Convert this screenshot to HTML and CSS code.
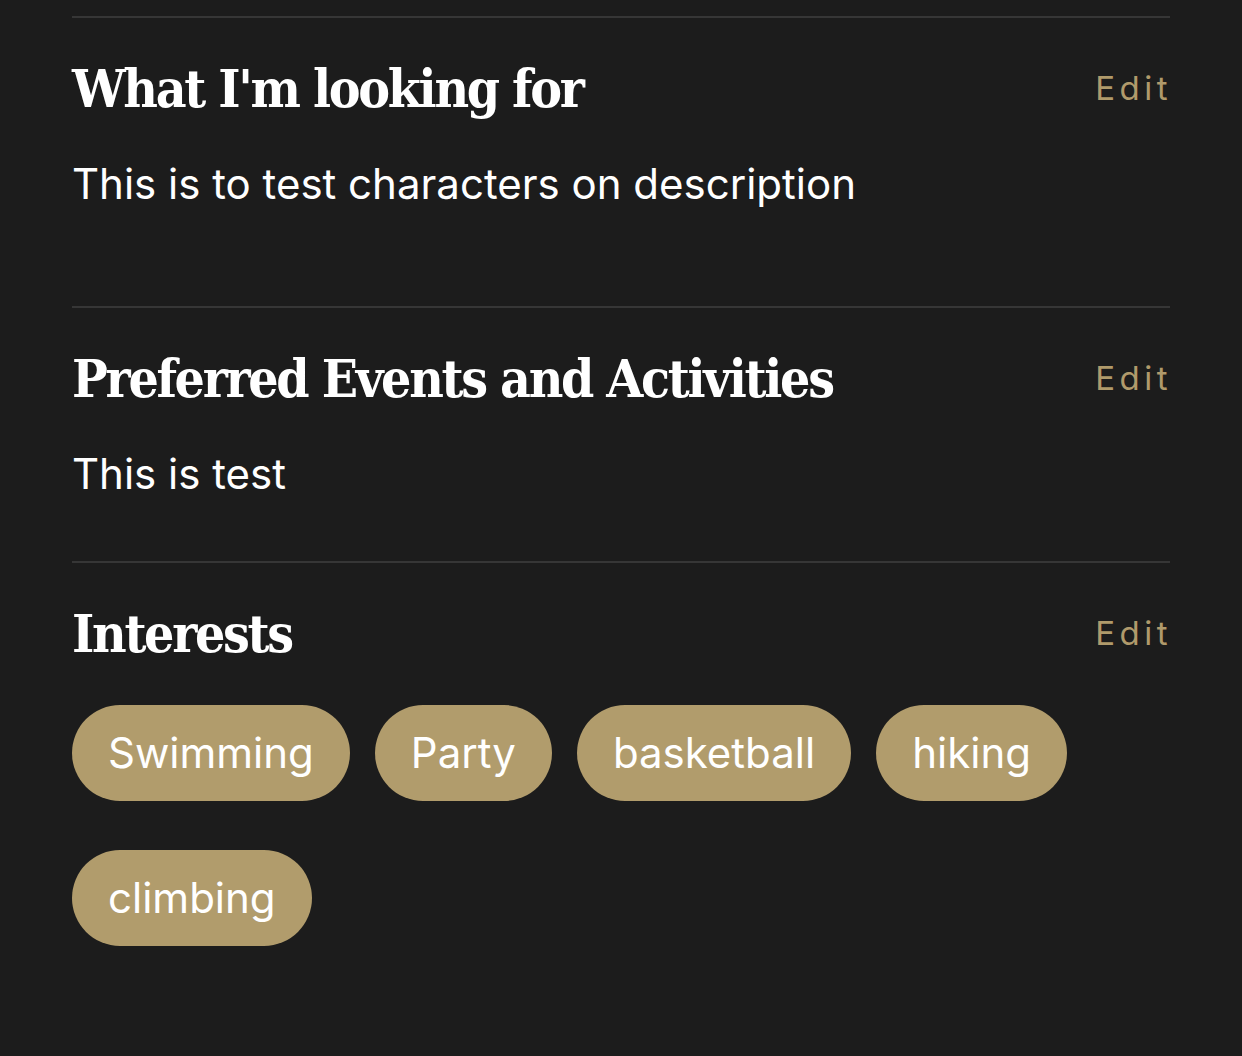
FILE: index.html
```html
<!DOCTYPE html>
<html lang="en">
<head>
<meta charset="utf-8">
<title>Profile</title>
<link rel="stylesheet" href="styles.css">
</head>
<body>
<main class="profile">
  <section class="block">
    <div class="block-head">
      <h2 class="block-title">What I'm looking for</h2>
      <a class="edit" href="#">Edit</a>
    </div>
    <p class="desc desc--tall">This is to test characters on description</p>
  </section>
  <section class="block">
    <div class="block-head">
      <h2 class="block-title">Preferred Events and Activities</h2>
      <a class="edit" href="#">Edit</a>
    </div>
    <p class="desc">This is test</p>
  </section>
  <section class="block">
    <div class="block-head">
      <h2 class="block-title">Interests</h2>
      <a class="edit" href="#">Edit</a>
    </div>
    <ul class="tags">
      <li class="tag">Swimming</li>
      <li class="tag">Party</li>
      <li class="tag">basketball</li>
      <li class="tag">hiking</li>
      <li class="tag">climbing</li>
    </ul>
  </section>
</main>
</body>
</html>
```

FILE: styles.css
```css
html, body {
  margin: 0;
  padding: 0;
  background: #1c1c1c;
}
body {
  min-height: 1056px;
  font-family: Inter, "Noto Sans", sans-serif;
  color: #ffffff;
}
.profile {
  padding: 16px 72px 0;
}
.block {
  border-top: 2px solid #363636;
  padding-top: 38px;
  padding-bottom: 62px;
}
.block-head {
  display: flex;
  align-items: center;
  justify-content: space-between;
}
.block-title {
  margin: 0;
  font-family: "DejaVu Serif Condensed", "DejaVu Serif", serif;
  font-weight: bold;
  font-size: 53px;
  line-height: 64px;
  letter-spacing: -2.3px;
  color: #ffffff;
}
.edit {
  font-family: Inter, sans-serif;
  font-size: 33px;
  line-height: 40px;
  letter-spacing: 4.5px;
  margin-right: -2px;
  color: #b09a6b;
  text-decoration: none;
}
.desc {
  margin: 39px 0 0;
  font-size: 42px;
  line-height: 50px;
  color: #ffffff;
}
.desc--tall {
  margin-bottom: 35px;
}
.tags {
  list-style: none;
  margin: 40px 0 0;
  padding: 0;
  display: flex;
  flex-wrap: wrap;
  column-gap: 25px;
  row-gap: 49px;
}
.tag {
  height: 96px;
  padding: 0 36px;
  border-radius: 48px;
  background: #b19c6c;
  color: #ffffff;
  font-size: 42px;
  line-height: 96px;
}
```
